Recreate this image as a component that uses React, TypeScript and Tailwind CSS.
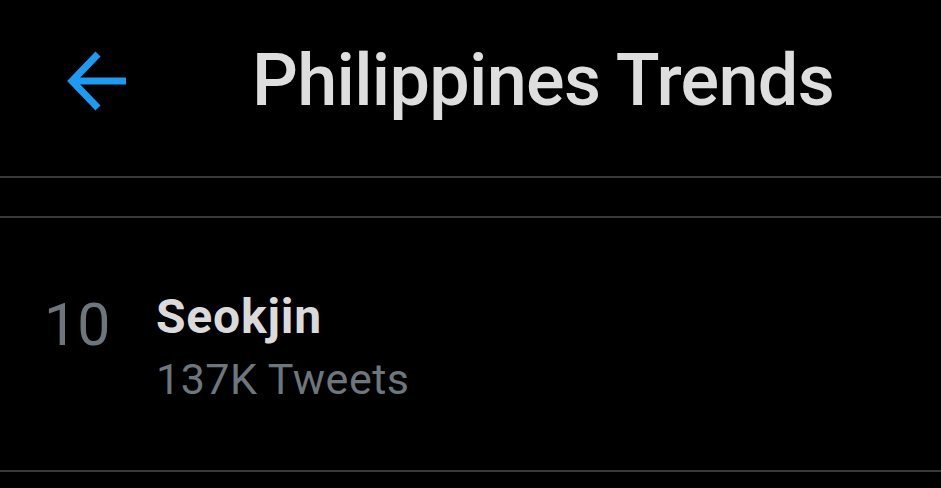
import React from "react";

export default function App() {
  return (
    <div className="w-[941px] h-[488px] bg-black overflow-hidden" style={{ fontFamily: "Roboto, 'Noto Sans', sans-serif" }}>
      <div className="h-[176px] flex items-center pb-[14px]">
        <svg width="70" height="70" viewBox="0 0 70 70" className="ml-[64px]">
          <path d="M62 35 H9" stroke="#1d9bf0" strokeWidth="7" fill="none" />
          <path d="M34 8 L8 35 L34 62" stroke="#1d9bf0" strokeWidth="7" fill="none" strokeLinejoin="miter" />
        </svg>
        <div className="ml-[118px] text-[72px] leading-none font-medium tracking-[-0.7px] text-[#dedede]">Philippines Trends</div>
      </div>
      <div className="h-[2px] bg-[#3a3a3a]" />
      <div className="h-[38px]" />
      <div className="h-[2px] bg-[#3a3a3a]" />
      <div className="h-[252px] flex">
        <div className="pl-[44px] pt-[77px] w-[156px] text-[59px] leading-none text-[#6e767d]">10</div>
        <div className="pt-[75px] flex flex-col">
          <div className="text-[48px] leading-none font-bold tracking-[0.8px] text-[#dadada]">Seokjin</div>
          <div className="mt-[17px] text-[43px] leading-none tracking-[0.5px] text-[#6e767d]">137K Tweets</div>
        </div>
      </div>
      <div className="h-[2px] bg-[#3a3a3a]" />
    </div>
  );
}
